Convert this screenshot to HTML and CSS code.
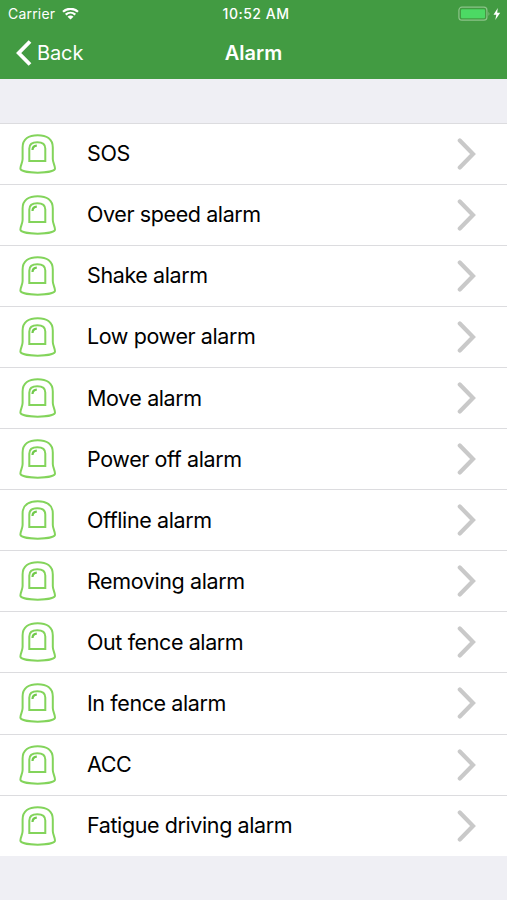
FILE: index.html
```html
<!DOCTYPE html>
<html lang="en">
<head>
    <meta charset="UTF-8">
    <meta name="viewport" content="width=device-width, initial-scale=1.0">
    <title>Alarm</title>
    <link rel="stylesheet" href="styles.css">
</head>
<body>
    <!-- Shared icons -->
    <svg width="0" height="0" class="icon-defs">
        <symbol id="icon-alarm" viewBox="0 0 38 40">
            <path d="M3.600 25V13.500C3.600 5 10 1.200 18.700 1.200S33.800 5 33.800 13.500V25C33.800 28.500 36 31.500 36 34.500C36 40 1.400 40 1.400 34.500C1.400 31.500 3.600 28.500 3.600 25Z" fill="none" stroke="#83d45b" stroke-width="2"/>
            <path d="M10.300 27V14.500C10.300 9.800 13.500 8.200 18.300 8.200S26.300 9.800 26.300 14.500V27Z" fill="none" stroke="#83d45b" stroke-width="2"/>
            <path d="M13.500 16C13.500 13 15 11.700 17.800 11.600" fill="none" stroke="#70c94a" stroke-width="2.200"/>
        </symbol>
        <symbol id="icon-next" viewBox="0 0 20 32">
            <path d="M2.800 2.500L16 16L2.800 29.500" fill="none" stroke="#c9c9c9" stroke-width="4.200" stroke-linecap="round"/>
        </symbol>
    </svg>

    <header class="header">
        <div class="status-bar">
            <div class="status-left">
                <span class="carrier">Carrier</span>
                <svg class="wifi" width="17" height="12" viewBox="0 0 17 12">
                    <path d="M1 3.800C5.300 -.200 11.700 -.200 16 3.800M3.700 6.600C6.500 4.100 10.500 4.100 13.300 6.600" fill="none" stroke="#fff" stroke-width="2.200"/>
                    <path d="M5.500 8.700C7.200 7.200 9.800 7.200 11.500 8.700L8.500 11.500Z" fill="#fff"/>
                </svg>
            </div>
            <div class="time">10:52 AM</div>
            <div class="status-right">
                <svg width="44" height="16" viewBox="0 0 44 16">
                    <rect x=".9" y="1.200" width="28" height="13" rx="3" fill="none" stroke="#8cc489" stroke-width="1.200"/>
                    <rect x="3" y="3.200" width="24" height="9" rx="1" fill="#4cd964"/>
                    <path d="M30.500 5.500Q32.300 7.700 30.500 10Z" fill="#8cc489"/>
                    <path d="M39.800 2L35.500 8.700H38.300L37.300 14L42.200 6.800H39.200Z" fill="#fff"/>
                </svg>
            </div>
        </div>
        <div class="nav-bar">
            <a class="back">
                <svg width="17" height="26" viewBox="0 0 17 26">
                    <path d="M15 1.500L3.700 13L15 24.500" fill="none" stroke="#fff" stroke-width="3.800"/>
                </svg>
                <span>Back</span>
            </a>
            <h1 class="title">Alarm</h1>
        </div>
    </header>

    <ul class="alarm-list">
        <li class="alarm-row">
            <svg class="alarm-icon"><use href="#icon-alarm"/></svg>
            <span class="alarm-name">SOS</span>
            <svg class="next"><use href="#icon-next"/></svg>
        </li>
        <li class="alarm-row">
            <svg class="alarm-icon"><use href="#icon-alarm"/></svg>
            <span class="alarm-name">Over speed alarm</span>
            <svg class="next"><use href="#icon-next"/></svg>
        </li>
        <li class="alarm-row">
            <svg class="alarm-icon"><use href="#icon-alarm"/></svg>
            <span class="alarm-name">Shake alarm</span>
            <svg class="next"><use href="#icon-next"/></svg>
        </li>
        <li class="alarm-row">
            <svg class="alarm-icon"><use href="#icon-alarm"/></svg>
            <span class="alarm-name">Low power alarm</span>
            <svg class="next"><use href="#icon-next"/></svg>
        </li>
        <li class="alarm-row">
            <svg class="alarm-icon"><use href="#icon-alarm"/></svg>
            <span class="alarm-name">Move alarm</span>
            <svg class="next"><use href="#icon-next"/></svg>
        </li>
        <li class="alarm-row">
            <svg class="alarm-icon"><use href="#icon-alarm"/></svg>
            <span class="alarm-name">Power off alarm</span>
            <svg class="next"><use href="#icon-next"/></svg>
        </li>
        <li class="alarm-row">
            <svg class="alarm-icon"><use href="#icon-alarm"/></svg>
            <span class="alarm-name">Offline alarm</span>
            <svg class="next"><use href="#icon-next"/></svg>
        </li>
        <li class="alarm-row">
            <svg class="alarm-icon"><use href="#icon-alarm"/></svg>
            <span class="alarm-name">Removing alarm</span>
            <svg class="next"><use href="#icon-next"/></svg>
        </li>
        <li class="alarm-row">
            <svg class="alarm-icon"><use href="#icon-alarm"/></svg>
            <span class="alarm-name">Out fence alarm</span>
            <svg class="next"><use href="#icon-next"/></svg>
        </li>
        <li class="alarm-row">
            <svg class="alarm-icon"><use href="#icon-alarm"/></svg>
            <span class="alarm-name">In fence alarm</span>
            <svg class="next"><use href="#icon-next"/></svg>
        </li>
        <li class="alarm-row">
            <svg class="alarm-icon"><use href="#icon-alarm"/></svg>
            <span class="alarm-name">ACC</span>
            <svg class="next"><use href="#icon-next"/></svg>
        </li>
        <li class="alarm-row">
            <svg class="alarm-icon"><use href="#icon-alarm"/></svg>
            <span class="alarm-name">Fatigue driving alarm</span>
            <svg class="next"><use href="#icon-next"/></svg>
        </li>
    </ul>
</body>
</html>
```
FILE: styles.css
```css
/* Global styles */
* {
    box-sizing: border-box;
}
body {
    font-family: Inter, "Liberation Sans", sans-serif;
    margin: 0;
    height: 900px;
    overflow: hidden;
    background-color: #efeff4;
    color: #000;
}
.icon-defs {
    display: none;
}

/* Header */
.header {
    height: 79px;
    background-color: #429b42;
    color: #fff;
}
.status-bar {
    display: grid;
    grid-template-columns: 1fr auto 1fr;
    align-items: center;
    height: 27px;
    padding: 0 5px 0 8px;
    font-size: 14px;
}
.status-left {
    display: flex;
    align-items: center;
    gap: 7px;
}
.carrier {
    letter-spacing: 0.2px;
}
.time {
    padding-left: 2px;
    font-weight: 500;
    letter-spacing: 0.5px;
}
.status-right {
    display: flex;
    justify-content: flex-end;
}
.nav-bar {
    display: grid;
    grid-template-columns: 1fr auto 1fr;
    align-items: center;
    height: 51px;
    padding: 0 15px;
}
.back {
    display: flex;
    align-items: center;
    gap: 5px;
    font-size: 20px;
    letter-spacing: -0.1px;
}
.title {
    margin: 0;
    font-size: 20px;
    font-weight: 600;
}

/* Alarm list */
.alarm-list {
    list-style: none;
    margin: 43.600px 0 0;
    padding: 0;
    background-color: #fff;
}
.alarm-row {
    display: flex;
    align-items: center;
    height: 61.100px;
    padding: 0 30px 0 19px;
    border-top: 1px solid #dcdcdf;
}
.alarm-icon {
    width: 38px;
    height: 40px;
}
.alarm-name {
    flex: 1;
    margin-left: 30px;
    padding-bottom: 1px;
    font-size: 21.500px;
    letter-spacing: -0.4px;
}
.next {
    width: 20px;
    height: 32px;
}
```
